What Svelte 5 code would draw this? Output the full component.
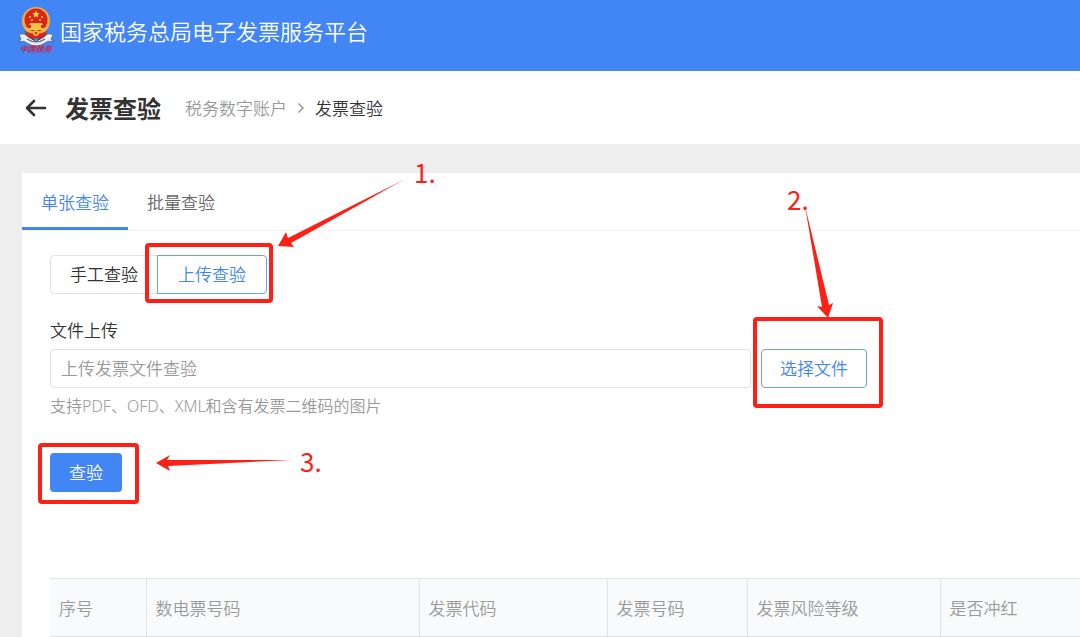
<script lang="ts">
  let activeTab = $state('single')
  let mode = $state('upload')
  let fileName = $state('')

  const tabs = [
    { id: 'single', label: '单张查验' },
    { id: 'batch', label: '批量查验' },
  ]

  const modes = [
    { id: 'manual', label: '手工查验' },
    { id: 'upload', label: '上传查验' },
  ]

  const columns = [
    { key: 'index', label: '序号' },
    { key: 'einvoice', label: '数电票号码' },
    { key: 'code', label: '发票代码' },
    { key: 'number', label: '发票号码' },
    { key: 'risk', label: '发票风险等级' },
    { key: 'red', label: '是否冲红' },
  ]
</script>

<div class="page">
  <header class="topbar">
    <svg class="logo" viewBox="0 0 36 50" aria-hidden="true">
      <path d="M1 29 Q5 26 9 30 Q18 37 27 30 Q31 26 35 29 L33 33 L35 36 Q30 34 27 37 Q18 43 9 37 Q6 34 1 36 L3 33Z" fill="#e9eef6" stroke="#345" stroke-width=".6" />
      <path d="M9 33 Q18 39 27 33" fill="none" stroke="#566477" stroke-width="1.2" />
      <path d="M6 24 L18 35 L30 24 L26 31 L18 36 L10 31Z" fill="#35406a" />
      <circle cx="18" cy="15" r="14" fill="#efb03f" />
      <circle cx="18" cy="14" r="11.500" fill="#dc2417" />
      <path d="M18 4.500l1.100 2.400 2.600.3-1.900 1.800.5 2.600-2.300-1.300-2.300 1.300.5-2.600-1.900-1.800 2.600-.3z" fill="#ffd84a" />
      <circle cx="12" cy="11" r="1" fill="#ffd84a" />
      <circle cx="24" cy="11" r="1" fill="#ffd84a" />
      <circle cx="14" cy="14" r="1" fill="#ffd84a" />
      <circle cx="22" cy="14" r="1" fill="#ffd84a" />
      <path d="M12 17h12l1 2H11zM13 19h10v3H13zM9 22h18v2H9z" fill="#f6c445" />
      <path d="M7 25 Q18 31 29 25 L27 30 Q18 35 9 30Z" fill="#d9261c" />
      <circle cx="18" cy="27" r="3" fill="#f0bd3c" />
      <circle cx="18" cy="27" r="1.300" fill="#d9261c" />
      <text class="logo-text" x="2" y="46">中国税务</text>
    </svg>
    <span class="brand">国家税务总局电子发票服务平台</span>
  </header>

  <div class="titlebar">
    <button class="back" aria-label="返回">
      <svg viewBox="0 0 22 18" aria-hidden="true">
        <path d="M9 2 L2 9 L9 16 M2 9 H20" fill="none" stroke="#333" stroke-width="2.600" stroke-linecap="round" stroke-linejoin="round" />
      </svg>
    </button>
    <h1>发票查验</h1>
    <nav class="crumbs">
      <a href="#account">税务数字账户</a>
      <svg viewBox="0 0 8 12" aria-hidden="true">
        <path d="M1.500 1.500 L6 6 L1.500 10.500" fill="none" stroke="#999" stroke-width="1.500" />
      </svg>
      <span>发票查验</span>
    </nav>
  </div>

  <main class="card">
    <div class="tabs" role="tablist">
      {#each tabs as tab (tab.id)}
        <button
          class="tab"
          class:active={activeTab === tab.id}
          role="tab"
          aria-selected={activeTab === tab.id}
          onclick={() => (activeTab = tab.id)}
        >{tab.label}</button>
      {/each}
    </div>

    <div class="content">
      <div class="modes">
        {#each modes as m (m.id)}
          <button
            class="mode"
            class:active={mode === m.id}
            aria-pressed={mode === m.id}
            onclick={() => (mode = m.id)}
          >{m.label}</button>
        {/each}
      </div>

      <label class="field-label" for="invoice-file">文件上传</label>
      <div class="upload-row">
        <input id="invoice-file" type="text" placeholder="上传发票文件查验" bind:value={fileName} readonly />
        <button class="choose">选择文件</button>
      </div>
      <p class="hint">支持PDF、OFD、XML和含有发票二维码的图片</p>

      <button class="submit">查验</button>

      <table>
        <colgroup>
          {#each columns as col (col.key)}
            <col class={col.key} />
          {/each}
        </colgroup>
        <thead>
          <tr>
            {#each columns as col (col.key)}
              <th scope="col">{col.label}</th>
            {/each}
          </tr>
        </thead>
      </table>
    </div>
  </main>

  <!-- numbered walkthrough marks over the form -->
  <svg class="marks" width="900" height="520" aria-hidden="true">
    <defs>
      <linearGradient id="fade-1" gradientUnits="userSpaceOnUse" x1="278" y1="246" x2="406" y2="179">
        <stop offset="0.75" stop-color="#fd2016" />
        <stop offset="1" stop-color="#fd2016" stop-opacity="0.5" />
      </linearGradient>
    </defs>
    <rect x="147" y="245" width="124" height="56" rx="2" />
    <rect x="755" y="319" width="126" height="87" rx="2" />
    <rect x="40" y="445" width="97" height="57" rx="2" />
    <path d="M278 246 L286 232 L288 238 L407 178 L291 243 L294 247Z" fill="url(#fade-1)" />
    <path d="M828 318 L817 306 L822 307 L805 206 L829 305 L833 303Z" />
    <path d="M156 463 L170 455 L167 460 L291 460 L168 466 L170 471Z" />
    <text x="414" y="183">1.</text>
    <text x="787" y="210">2.</text>
    <text x="300" y="472">3.</text>
  </svg>
</div>

<style>
  :global(body) {
    margin: 0;
    background: #eee;
  }
  .page {
    position: relative;
    display: flex;
    flex-direction: column;
    min-height: 100vh;
    overflow: hidden;
    font-family: 'Noto Sans CJK SC', sans-serif;
    font-size: 17px;
    font-weight: 350;
    line-height: 24px;
    color: #333;
  }
  button,
  input {
    box-sizing: border-box;
    margin: 0;
    font: inherit;
  }
  button {
    padding: 0;
    border: 0;
    background: none;
    color: inherit;
    cursor: pointer;
  }
  .topbar {
    display: flex;
    align-items: center;
    gap: 6px;
    height: 71px;
    padding: 0 18px;
    box-sizing: border-box;
    background: #4285f5;
    color: #fff;
  }
  .logo {
    width: 36px;
    height: 50px;
    margin-bottom: 10px;
  }
  .logo-text {
    font-family: 'Noto Sans CJK SC', sans-serif;
    font-size: 8px;
    font-style: italic;
    font-weight: 700;
    fill: #c02a50;
  }
  .brand {
    margin-bottom: 12px;
    font-size: 22px;
    line-height: 32px;
  }
  .titlebar {
    display: flex;
    align-items: center;
    height: 73px;
    padding: 0 25px;
    background: #fff;
  }
  .back {
    display: flex;
  }
  .back svg {
    width: 22px;
    height: 18px;
  }
  h1 {
    margin: 0 24px 0 18px;
    font-size: 24px;
    font-weight: 700;
    line-height: 32px;
  }
  .crumbs {
    display: flex;
    align-items: center;
    gap: 10px;
  }
  .crumbs a {
    color: #999;
    text-decoration: none;
  }
  .crumbs svg {
    width: 8px;
    height: 12px;
  }
  .card {
    flex: 1;
    margin: 29px 0 0 22px;
    background: #fff;
  }
  .tabs {
    display: flex;
    height: 58px;
    box-sizing: border-box;
    border-bottom: 1px solid #f2f2f2;
  }
  .tab {
    padding: 0 19px;
    border-top: 3px solid transparent;
    border-bottom: 3px solid transparent;
    color: #666;
  }
  .tab.active {
    border-bottom-color: #4285f5;
    color: #4285f5;
  }
  .content {
    padding: 24px 0 0 28px;
  }
  .modes {
    display: flex;
    margin-bottom: 24px;
  }
  .mode {
    height: 39px;
    padding: 0 19px 2px;
    border: 1px solid #e2e2e2;
    border-radius: 4px 0 0 4px;
  }
  .mode + .mode {
    margin-left: -1px;
    padding: 0 20px 2px;
    border-radius: 0 4px 4px 0;
  }
  .mode.active {
    border-color: #6b9ff7;
    background: #fff;
    color: #4285f5;
  }
  .field-label {
    display: block;
    margin-bottom: 7px;
  }
  .upload-row {
    display: flex;
    gap: 10px;
  }
  .upload-row input {
    flex: 0 1 701px;
    min-width: 0;
    height: 39px;
    padding: 0 10px 2px;
    border: 1px solid #e2e2e2;
    border-radius: 4px;
    outline: none;
    color: #333;
  }
  .upload-row input::placeholder {
    color: #999;
    opacity: 1;
  }
  .choose {
    height: 39px;
    padding: 0 18px 2px;
    border: 1px solid #6b9ff7;
    border-radius: 4px;
    color: #4285f5;
  }
  .hint {
    margin: 6px 0 35px;
    font-family: 'Noto Sans', 'Noto Sans CJK SC', sans-serif;
    font-size: 16px;
    color: #999;
  }
  .submit {
    height: 39px;
    padding: 0 19px 2px;
    border-radius: 4px;
    background: #4285f5;
    color: #fff;
  }
  table {
    width: 100%;
    margin-top: 86px;
    border-collapse: collapse;
    table-layout: fixed;
  }
  .index {
    width: 96px;
  }
  .einvoice {
    width: 273px;
  }
  .code {
    width: 188px;
  }
  .number {
    width: 140px;
  }
  .risk {
    width: 193px;
  }
  th {
    height: 58px;
    padding: 0 9px;
    box-sizing: border-box;
    border: 1px solid #e2e3e5;
    background: #f9fafc;
    color: #999;
    font-weight: inherit;
    text-align: left;
  }
  th:first-child {
    border-left: 0;
  }
  th:last-child {
    border-right: 0;
  }
  .marks {
    position: absolute;
    top: 0;
    left: 0;
    pointer-events: none;
    fill: #fd2016;
  }
  .marks rect {
    fill: none;
    stroke: #fd2016;
    stroke-width: 4px;
  }
  .marks text {
    font-size: 26px;
    font-weight: 400;
  }
</style>
